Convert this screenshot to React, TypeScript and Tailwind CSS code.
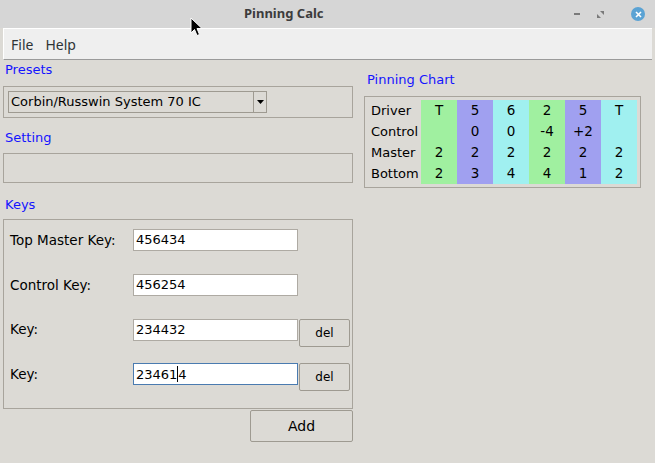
export default function App() {
  const chart = [
    ["Driver", "T", "5", "6", "2", "5", "T"],
    ["Control", "", "0", "0", "-4", "+2", ""],
    ["Master", "2", "2", "2", "2", "2", "2"],
    ["Bottom", "2", "3", "4", "4", "1", "2"],
  ];
  const colBg = ["bg-[#a0f0a0]", "bg-[#a0a0f0]", "bg-[#a0f0f0]", "bg-[#a0f0a0]", "bg-[#a0a0f0]", "bg-[#a0f0f0]"];

  return (
    <div className="relative w-[655px] h-[463px] overflow-hidden bg-[#dcdad5] text-[13px] text-black font-['DejaVu_Sans',sans-serif]">
      {/* Title bar */}
      <div className="relative flex h-[28px] items-center bg-[#d6d6d6]">
        <div className="w-full pl-[244px] text-[13px] font-bold text-[#3c3c3c] font-['Noto_Sans',sans-serif]">Pinning Calc</div>
        <div className="absolute right-[10px] top-[7px] flex items-center gap-[17px]">
          <div className="h-[2px] w-[6px] bg-[#7a7a7a]" />
          <svg width="7" height="7" viewBox="0 0 7 7">
            <path d="M0 7 L0 3 L4 7 Z M7 0 L7 4 L3 0 Z" fill="#7a7a7a" />
          </svg>
          <div className="ml-[10px] flex h-[14px] w-[14px] items-center justify-center rounded-full bg-[#5ba3d4]">
            <svg width="7" height="7" viewBox="0 0 7 7">
              <path d="M1 1 L6 6 M6 1 L1 6" stroke="white" strokeWidth="1.6" />
            </svg>
          </div>
        </div>
      </div>

      {/* Menu bar */}
      <div className="mx-[3px] flex h-[32px] items-center gap-[12px] border-t border-l border-white border-b border-b-[#9a9a9a] bg-[#efefef] pl-[7px] text-[14px] text-[#2e3436] font-['Noto_Sans',sans-serif]">
        <span>File</span>
        <span>Help</span>
      </div>

      <div className="flex px-[3px]">
        {/* Left column */}
        <div className="flex w-[350px] flex-col">
          <div className="h-[20px] pl-[2px] leading-[20px] text-[#1414ff]">Presets</div>
          <div className="mt-[6px] h-[32px] border border-[#a8a49c] p-[4px]">
            <div className="flex h-[22px] w-[259px] border border-[#9e9a91] bg-[#dcdad5]">
              <div className="flex-1 pl-[2px] leading-[20px]">Corbin/Russwin System 70 IC</div>
              <div className="flex w-[13px] items-center justify-center border-l border-[#9e9a91]">
                <svg width="7" height="4" viewBox="0 0 7 4">
                  <path d="M0 0 L7 0 L3.5 4 Z" fill="black" />
                </svg>
              </div>
            </div>
          </div>

          <div className="mt-[10px] h-[20px] pl-[2px] leading-[20px] text-[#1414ff]">Setting</div>
          <div className="mt-[5px] h-[30px] border border-[#a8a49c]" />

          <div className="mt-[12px] h-[20px] pl-[2px] leading-[20px] text-[#1414ff]">Keys</div>
          <div className="mt-[4px] flex h-[190px] flex-col border border-[#a8a49c] pl-[6px] pt-[9px]">
            <KeyRow label="Top Master Key:" value="456434" />
            <KeyRow label="Control Key:" value="456254" />
            <KeyRow label="Key:" value="234432" del />
            <KeyRow label="Key:" value="234614" del focused />
          </div>
          <button className="mt-[1px] h-[32px] w-[103px] self-end rounded-[2px] border border-[#9e9a91] bg-[#dcdad5] text-[14px]">
            Add
          </button>
        </div>

        {/* Right column */}
        <div className="ml-[11px] flex flex-col">
          <div className="mt-[10px] h-[20px] pl-[3px] leading-[20px] text-[#1414ff]">Pinning Chart</div>
          <div className="mt-[6px] w-[277px] border border-[#a8a49c] p-[3px]">
            <div className="grid grid-cols-[53px_repeat(6,36px)] text-[13.5px]">
              {chart.map((row) =>
                row.map((cell, i) => (
                  <div
                    key={row[0] + i}
                    className={
                      i === 0
                        ? "flex h-[21px] items-center pl-[3px] text-[13px]"
                        : "flex h-[21px] items-center justify-center " + colBg[i - 1]
                    }
                  >
                    {cell}
                  </div>
                ))
              )}
            </div>
          </div>
        </div>
      </div>

      {/* mouse pointer */}
      <svg className="absolute left-[190px] top-[17px]" width="13" height="20" viewBox="0 0 13 20">
        <path d="M1 1 L1 16 L4.5 12.5 L7 18.5 L9.5 17.5 L7 11.5 L12 11.5 Z" fill="black" stroke="white" strokeWidth="1" />
      </svg>
    </div>
  );
}

function KeyRow({ label, value, del, focused }: { label: string; value: string; del?: boolean; focused?: boolean }) {
  return (
    <div className="flex h-[45px] items-start">
      <div className="flex h-[22px] w-[123px] items-center text-[13.5px]">{label}</div>
      <div
        className={
          focused
            ? "flex h-[22px] w-[165px] items-center border border-[#4a7bb0] bg-white pl-[2px]"
            : "flex h-[22px] w-[165px] items-center border border-[#aeaaa3] bg-white pl-[2px]"
        }
      >
        {focused ? (
          <>
            {value.slice(0, 5)}
            <span className="h-[16px] w-px bg-black" />
            {value.slice(5)}
          </>
        ) : (
          value
        )}
      </div>
      {del && (
        <button className="ml-px h-[28px] w-[51px] rounded-[2px] border border-[#9e9a91] bg-[#dcdad5] text-[12px]">
          del
        </button>
      )}
    </div>
  );
}
